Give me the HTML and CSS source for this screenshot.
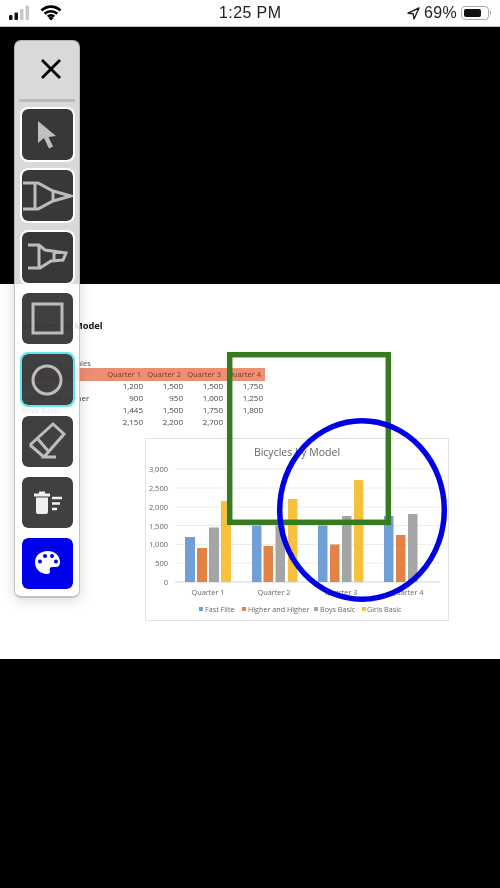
FILE: index.html
```html
<!DOCTYPE html>
<html lang="en">
<head>
    <meta charset="UTF-8">
    <meta name="viewport" content="width=device-width, initial-scale=1.0">
    <title>Annotate</title>
    <link rel="stylesheet" href="styles.css">
</head>
<body>
    <div class="status">
        <div class="status-left">
            <svg width="22" height="16" viewBox="0 0 22 16">
                <rect x="0" y="10" width="3.500" height="5" rx="1" fill="#111"/>
                <rect x="5.500" y="7.500" width="3.500" height="7.500" rx="1" fill="#111"/>
                <rect x="11" y="4" width="3.500" height="11" rx="1" fill="#c9c9c9"/>
                <rect x="16.500" y="0.500" width="3.500" height="14.500" rx="1" fill="#c9c9c9"/>
            </svg>
            <svg width="22" height="16" viewBox="0 0 22 16">
                <path d="M1.500 5.500a13.500 13.500 0 0 1 19 0M4.700 8.800a9 9 0 0 1 12.600 0M7.800 11.600a4.600 4.600 0 0 1 6.400 0" fill="none" stroke="#000" stroke-width="2.700"/>
                <path d="M8.500 13l2.500-1.800 2.500 1.800-2.500 2.600z" fill="#000"/>
            </svg>
        </div>
        <div class="status-time">1:25 PM</div>
        <div class="status-right">
            <svg width="13" height="13" viewBox="0 0 13 13">
                <path d="M12 1L1 6.200l5.200.6.800 5.200z" fill="none" stroke="#222" stroke-width="1.400" stroke-linejoin="round"/>
            </svg>
            <span class="battery-text">69%</span>
            <span class="battery"><span class="battery-fill"></span></span>
            <span class="battery-cap"></span>
        </div>
    </div>

    <div class="stage">
        <div class="sheet">
            <h1>Bicycles by Model</h1>
            <div class="caption">Projected Unit Sales</div>
            <div class="table">
                <div class="cell head"></div>
                <div class="cell head num">Quarter 1</div>
                <div class="cell head num">Quarter 2</div>
                <div class="cell head num">Quarter 3</div>
                <div class="cell head num">Quarter 4</div>

                <div class="cell">Fast Flite</div>
                <div class="cell num">1,200</div>
                <div class="cell num">1,500</div>
                <div class="cell num">1,500</div>
                <div class="cell num">1,750</div>

                <div class="cell">Higher and Higher</div>
                <div class="cell num">900</div>
                <div class="cell num">950</div>
                <div class="cell num">1,000</div>
                <div class="cell num">1,250</div>

                <div class="cell">Boys Basic</div>
                <div class="cell num">1,445</div>
                <div class="cell num">1,500</div>
                <div class="cell num">1,750</div>
                <div class="cell num">1,800</div>

                <div class="cell">Girls Basic</div>
                <div class="cell num">2,150</div>
                <div class="cell num">2,200</div>
                <div class="cell num">2,700</div>
                <div class="cell num"></div>
            </div>

            <!-- chart uses page coordinates in the viewBox -->
            <svg class="chart" width="304" height="183" viewBox="145 438 304 183">
                <g class="grid">
                    <path d="M175 469H440M175 488H440M175 507H440M175 525.500H440M175 544.500H440M175 563H440"/>
                    <path class="axis" d="M175 582H440"/>
                </g>
                <text class="chart-title" x="297" y="456">Bicycles by Model</text>
                <g class="tick">
                    <text x="168" y="472">3,000</text>
                    <text x="168" y="491">2,500</text>
                    <text x="168" y="510">2,000</text>
                    <text x="168" y="529">1,500</text>
                    <text x="168" y="547">1,000</text>
                    <text x="168" y="566">500</text>
                    <text x="168" y="585">0</text>
                </g>
                <g fill="#6f9fd6">
                    <rect x="185" y="537" width="10" height="45"/>
                    <rect x="252" y="525.500" width="9.500" height="56.500"/>
                    <rect x="318" y="525.500" width="9.500" height="56.500"/>
                    <rect x="384" y="516" width="9.500" height="66"/>
                </g>
                <g fill="#e08344">
                    <rect x="197" y="548" width="10" height="34"/>
                    <rect x="263.500" y="546" width="9.500" height="36"/>
                    <rect x="330" y="544.500" width="9.500" height="37.500"/>
                    <rect x="396" y="535" width="9.500" height="47"/>
                </g>
                <g fill="#a5a5a5">
                    <rect x="209" y="527.500" width="10" height="54.500"/>
                    <rect x="275.500" y="525.500" width="9.500" height="56.500"/>
                    <rect x="342" y="516" width="9.500" height="66"/>
                    <rect x="408" y="514" width="9.500" height="68"/>
                </g>
                <g fill="#f7c13f">
                    <rect x="221" y="501" width="10" height="81"/>
                    <rect x="288" y="499" width="9.500" height="83"/>
                    <rect x="354" y="480" width="9.500" height="102"/>
                </g>
                <g class="cat">
                    <text x="208" y="594.500">Quarter 1</text>
                    <text x="274" y="594.500">Quarter 2</text>
                    <text x="341" y="594.500">Quarter 3</text>
                    <text x="407" y="594.500">Quarter 4</text>
                </g>
                <g class="legend">
                    <rect x="199" y="607" width="4" height="4" fill="#6f9fd6"/>
                    <text x="205" y="611.500">Fast Flite</text>
                    <rect x="242" y="607" width="4" height="4" fill="#e08344"/>
                    <text x="248" y="611.500">Higher and Higher</text>
                    <rect x="314" y="607" width="4" height="4" fill="#a5a5a5"/>
                    <text x="320" y="611.500">Boys Basic</text>
                    <rect x="362" y="607" width="4" height="4" fill="#f7c13f"/>
                    <text x="367" y="611.500">Girls Basic</text>
                </g>
            </svg>

            <!-- drawn annotations sit on the sheet, free canvas -->
            <svg class="marks" width="500" height="375" viewBox="0 284 500 375">
                <rect x="229.700" y="354.700" width="158.600" height="167.600" fill="none" stroke="#377a1f" stroke-width="5.500"/>
                <ellipse cx="362" cy="510" rx="82.300" ry="89.300" fill="none" stroke="#0000e6" stroke-width="5.500"/>
            </svg>
        </div>

        <div class="toolbar">
            <button class="close" type="button">
                <svg width="20" height="20" viewBox="0 0 20 20">
                    <path d="M1 1L19 19M19 1L1 19" stroke="#000" stroke-width="2.800"/>
                </svg>
            </button>
            <div class="divider"></div>

            <button class="tool" type="button">
                <svg width="51" height="51" viewBox="0 0 51 51">
                    <path d="M16 12V34L22 29 27 39.500 31 37.500 26.500 28 34 27z" fill="#c0c0c0"/>
                </svg>
            </button>
            <button class="tool" type="button">
                <svg width="51" height="51" viewBox="0 0 51 51">
                    <path class="line" d="M1 13H16L31 21 49 26 31 31 16 39H1M13 13V39M31 21V31"/>
                </svg>
            </button>
            <button class="tool" type="button">
                <svg width="51" height="51" viewBox="0 0 51 51">
                    <path class="line" d="M6 13H17L23 18 44 21 41 28 29 29 18 36H6M17 13V36M32 20V29"/>
                </svg>
            </button>
            <button class="tool" type="button">
                <svg width="51" height="51" viewBox="0 0 51 51">
                    <rect class="line" x="11" y="11" width="29" height="29"/>
                </svg>
            </button>
            <button class="tool active" type="button">
                <svg width="51" height="51" viewBox="0 0 51 51">
                    <circle class="line" cx="25" cy="26" r="14"/>
                </svg>
            </button>
            <button class="tool" type="button">
                <svg width="51" height="51" viewBox="0 0 51 51">
                    <path class="line" d="M8 29L31 8 42 18 22 41H34M22 41L8 29M15 22L27 36"/>
                </svg>
            </button>
            <button class="tool" type="button">
                <svg width="51" height="51" viewBox="0 0 51 51">
                    <path d="M12 16.500H28V19.500H12zM17 14.500H23V17H17zM14 20.500H26V35a2 2 0 0 1-2 2H16a2 2 0 0 1-2-2z" fill="#f0f0f0"/>
                    <path d="M30 21H40M30 26.500H38M30 32H35" stroke="#f0f0f0" stroke-width="2.600"/>
                </svg>
            </button>
            <button class="tool palette" type="button">
                <svg width="51" height="51" viewBox="0 0 51 51">
                    <path d="M25.500 13C18 13 13 18 13 24.500 13 30.500 18 36 25 36c2.500 0 3.500-1.500 2.800-3.400-.8-2 .4-3.600 2.500-3.600h3.500c2.800 0 4.200-1.800 4.200-4.500C38 17.500 32.500 13 25.500 13z" fill="#fff"/>
                    <circle cx="18" cy="23.500" r="2" fill="#0000f0"/>
                    <circle cx="23" cy="18" r="2" fill="#0000f0"/>
                    <circle cx="30" cy="18" r="2" fill="#0000f0"/>
                    <circle cx="34" cy="23.500" r="2" fill="#0000f0"/>
                </svg>
            </button>
        </div>
    </div>
</body>
</html>
```

FILE: styles.css
```css
body {
    margin: 0;
    width: 500px;
    height: 888px;
    overflow: hidden;
    display: flex;
    flex-direction: column;
    font-family: "Open Sans", sans-serif;
    background-color: #000;
}

/* status bar */
.status {
    height: 26px;
    flex: none;
    display: flex;
    align-items: center;
    justify-content: space-between;
    position: relative;
    padding: 0 9px 0 9px;
    background-color: #fff;
    border-bottom: 1px solid #c4c4c4;
    font-family: "Liberation Sans", sans-serif;
    font-size: 16px;
    color: #222;
    filter: blur(0.3px);
}

.status-left {
    display: flex;
    align-items: center;
    gap: 9px;
}

.status-time {
    position: absolute;
    left: 219px;
    top: 4px;
    letter-spacing: 0.4px;
}

.status-right {
    display: flex;
    align-items: center;
    gap: 4px;
}

.battery-text {
    letter-spacing: 0.3px;
}

.battery {
    width: 28px;
    height: 14px;
    box-sizing: border-box;
    padding: 2px;
    display: flex;
    border: 1px solid #aaa;
    border-radius: 4px;
}

.battery-fill {
    width: 17px;
    background-color: #111;
    border-radius: 2px;
}

.battery-cap {
    width: 1px;
    height: 4px;
    margin-left: -3px;
    background-color: #aaa;
}

/* document */
.stage {
    flex: 1;
    position: relative;
}

.sheet {
    position: relative;
    height: 375px;
    margin-top: 257px;
    box-sizing: border-box;
    padding: 36px 0 0 21px;
    background-color: #fff;
    filter: blur(0.4px);
}

h1 {
    margin: 0 0 25px;
    font-size: 9.300px;
    line-height: 12px;
    color: #111;
}

.caption {
    height: 12px;
    font-size: 7.500px;
    line-height: 12px;
    color: #555;
}

.table {
    display: grid;
    width: 244px;
    grid-template-columns: 84px repeat(4, 40px);
    grid-auto-rows: 12px;
    margin-top: -1px;
    font-size: 8px;
    line-height: 12px;
    color: #444;
}

.cell {
    white-space: nowrap;
}

.num {
    text-align: right;
    padding-right: 2px;
}

.head {
    height: 13px;
    background-color: #ee8e72;
    color: #7a3a26;
    font-size: 7.500px;
    padding-right: 4px;
}

.table .cell:nth-child(-n+5) {
    margin-bottom: 1px;
}

.chart {
    display: block;
    margin: 10px 0 0 124px;
    background-color: #fff;
    outline: 1px solid #e2e2e2;
    outline-offset: -1px;
}

.grid path {
    fill: none;
    stroke: #ececec;
}

.grid .axis {
    stroke: #d4d4d4;
}

.chart text {
    font-family: "Open Sans", sans-serif;
}

.chart-title {
    font-size: 10.500px;
    fill: #666;
    text-anchor: middle;
}

.tick text {
    font-size: 7.500px;
    fill: #666;
    text-anchor: end;
}

.cat text {
    font-size: 7.300px;
    fill: #666;
    text-anchor: middle;
}

.legend text {
    font-size: 7.200px;
    fill: #666;
}

.marks {
    position: absolute;
    left: 0;
    top: 0;
}

/* floating toolbar */
.toolbar {
    position: absolute;
    left: 14px;
    top: 13px;
    width: 66px;
    height: 558px;
    box-sizing: border-box;
    display: flex;
    flex-direction: column;
    align-items: center;
    gap: 6.300px;
    background-color: rgba(255, 255, 255, 0.85);
    border: 1px solid rgba(170, 170, 170, 0.7);
    border-bottom-width: 2px;
    border-radius: 7px;
    box-shadow: 0 2px 14px rgba(0, 0, 0, 0.16);
}

button {
    padding: 0;
    border: none;
    background: none;
    flex: none;
}

.close {
    width: 64px;
    height: 54.500px;
    margin-top: 1px;
    margin-bottom: -1px;
    padding-left: 8px;
    display: flex;
    align-items: center;
    justify-content: center;
}

.divider {
    width: 56px;
    height: 3px;
    flex: none;
    margin: -3px 0 -1px;
    background-color: #bcbcbc;
}

.tool {
    width: 55px;
    height: 55px;
    box-sizing: border-box;
    border: 2px solid rgba(255, 255, 255, 0.95);
    border-radius: 8px;
    background-color: rgba(13, 13, 13, 0.79);
    background-clip: padding-box;
}

.tool svg {
    display: block;
    filter: blur(0.4px);
}

.line {
    fill: none;
    stroke: #bdbdbd;
    stroke-width: 3px;
}

.active {
    border-color: #5ee8ee;
}

.palette {
    background-color: #0000f0;
}
```
